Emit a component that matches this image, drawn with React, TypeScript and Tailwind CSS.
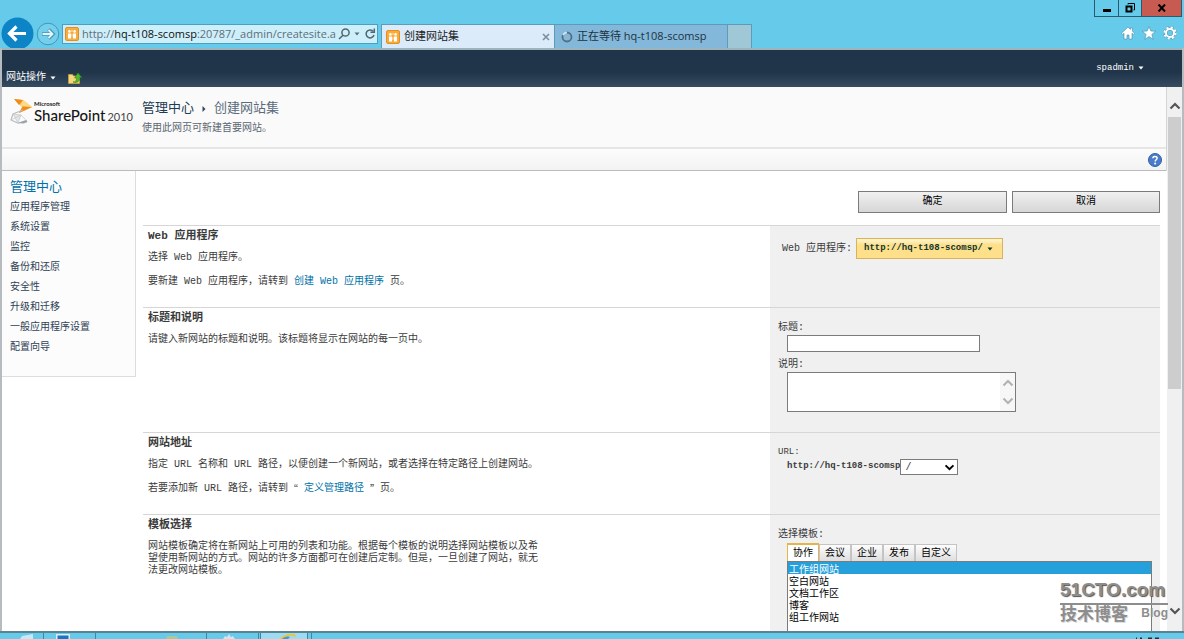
import { useState } from 'react';
import type { ReactNode } from 'react';

const NAV_ITEMS = [
  '应用程序管理',
  '系统设置',
  '监控',
  '备份和还原',
  '安全性',
  '升级和迁移',
  '一般应用程序设置',
  '配置向导',
];

const TEMPLATE_TABS = ['协作', '会议', '企业', '发布', '自定义'];

const TEMPLATES = ['工作组网站', '空白网站', '文档工作区', '博客', '组工作网站'];

function Favicon() {
  return (
    <svg viewBox="0 0 14 14" className="w-[14px] h-[14px] shrink-0">
      <rect x="0.5" y="0.5" width="13" height="13" rx="1.5" fill="#f9ab3c" stroke="#e58f20" />
      <circle cx="4.4" cy="4.4" r="1.3" fill="#fff" />
      <circle cx="9.6" cy="4.4" r="1.3" fill="#fff" />
      <path d="M3 6.5h3v5H3zM8 6.5h3v5H8z" fill="#fff" />
      <path d="M6.3 3.2h1.4v1.6H6.3zM6.5 7h1v3h-1z" fill="#fde2b4" />
    </svg>
  );
}

function CaretDown({ className }: { className: string }) {
  return (
    <svg viewBox="0 0 6 4" className={className}>
      <path d="M0.5 0.5h5L3 3.5z" fill="currentColor" />
    </svg>
  );
}

function Chevron({ up, className }: { up?: boolean; className: string }) {
  return (
    <svg viewBox="0 0 12 8" className={className} fill="none" stroke="currentColor" strokeWidth="2.2">
      <path d={up ? 'M1.5 6.5L6 2l4.5 4.5' : 'M1.5 1.5L6 6l4.5-4.5'} />
    </svg>
  );
}

function BrowserBar() {
  return (
    <header className="flex justify-between h-12 shrink-0 bg-[#66caea] font-['Open_Sans','Noto_Sans_CJK_SC',sans-serif]">
      <div className="flex items-end">
        <button type="button" aria-label="后退" className="w-[35px] h-[31px] pl-px overflow-hidden">
          <svg viewBox="0 0 33 31" className="w-[33px] h-[31px]">
            <circle cx="16.5" cy="16.5" r="16" fill="#0c84c6" />
            <path d="M25 16.5H9M15.5 9.5l-7 7 7 7" fill="none" stroke="#fff" strokeWidth="3.2" />
          </svg>
        </button>
        <button type="button" aria-label="前进" className="w-[24px] h-[26px] ml-px">
          <svg viewBox="0 0 24 26" className="w-[24px] h-[26px]">
            <circle cx="12" cy="12" r="10.8" fill="#74cfec" stroke="#4397b6" />
            <path d="M6 12h11M12.5 7.5L17 12l-4.5 4.5" fill="none" stroke="#4397b6" strokeWidth="3.6" />
            <path d="M6.5 12h10M12.5 8L16.5 12l-4 4" fill="none" stroke="#e2f5fb" strokeWidth="1.8" />
          </svg>
        </button>

        <div className="flex items-center w-[316px] h-[20px] mb-1 ml-[2px] pl-[2px] pr-px border border-[#4b9fc0] bg-[#cdeffa] text-[#5e6e78]">
          <Favicon />
          <div className="flex-1 ml-[3px] text-[11px] leading-4 whitespace-nowrap">
            http://<span className="text-[#111]">hq-t108-scomsp</span>:20787/_admin/createsite.a
          </div>
          <button type="button" aria-label="搜索">
            <svg viewBox="0 0 12 12" className="w-[12px] h-[12px]" fill="none" stroke="#52646f" strokeWidth="1.5">
              <circle cx="7.5" cy="4.5" r="3.6" />
              <path d="M5 7.2L1 11" />
            </svg>
          </button>
          <CaretDown className="w-[6px] h-1 mx-1" />
          <button type="button" aria-label="刷新">
            <svg viewBox="0 0 12 12" className="w-[12px] h-[12px]" fill="none" stroke="#52646f" strokeWidth="1.5">
              <path d="M9.3 3.4A4 4 0 1 0 10 7" />
              <path d="M10.3 0.5v3.8H6.5" />
            </svg>
          </button>
        </div>

        <div className="flex items-center w-[174px] h-6 ml-[3px] px-1 border border-b-0 border-[#5a9dbb] bg-[#dbebfa] text-[11px] text-[#222]">
          <Favicon />
          <span className="flex-1 ml-1">创建网站集</span>
          <button type="button" aria-label="关闭选项卡">
            <svg viewBox="0 0 8 8" className="w-2 h-2" stroke="#7d8d9b" strokeWidth="1.6">
              <path d="M1 1l6 6M7 1L1 7" />
            </svg>
          </button>
        </div>
        <div className="flex items-center w-[173px] h-6 px-[6px] border-t border-r border-[#5a9dbb] bg-[#83b8da] text-[11px] text-[#22323e]">
          <svg viewBox="0 0 12 12" className="w-[12px] h-[12px]" fill="none" strokeWidth="1.8">
            <circle cx="6" cy="6" r="4.5" stroke="#54707f" />
            <path d="M2 4A4.5 4.5 0 0 1 6 1.5" stroke="#c9e2f2" />
          </svg>
          <span className="ml-1">正在等待 hq-t108-scomsp</span>
        </div>
        <button type="button" aria-label="新建选项卡" className="w-6 h-6 border-t border-r border-[#5a9dbb] bg-[#9fc7d6]" />
      </div>

      <div className="flex flex-col items-end justify-between pr-[2px]">
        <div className="flex h-[17px] border border-t-0 border-[#2a5a6c] text-black">
          <button type="button" aria-label="最小化" className="flex items-center justify-center w-6 border-r border-[#2a5a6c]">
            <svg viewBox="0 0 10 10" className="w-[10px] h-[10px]">
              <path d="M1 6h8v3H1z" />
            </svg>
          </button>
          <button type="button" aria-label="还原" className="flex items-center justify-center w-[23px] border-r border-[#2a5a6c]">
            <svg viewBox="0 0 10 10" className="w-[10px] h-[10px]" fill="none" stroke="#000">
              <path d="M3 1.5V0.5h6.5v6.5H8.5" />
              <path d="M1.5 3.5h5v5h-5z" strokeWidth="2" />
            </svg>
          </button>
          <button type="button" aria-label="关闭" className="flex items-center justify-center w-[39px] bg-[#c75a51]">
            <svg viewBox="0 0 10 8" className="w-[10px] h-2" stroke="#000" strokeWidth="2">
              <path d="M1.5 0.5l6.5 7M8 0.5l-6.5 7" />
            </svg>
          </button>
        </div>
        <div className="flex items-center gap-[7px] pr-[5px] pb-2">
          <button type="button" aria-label="主页">
            <svg viewBox="0 0 14 14" className="w-[14px] h-[14px]">
              <path d="M7 1L0.5 7.2l1.2 1.2L3 7.3V13h3V9h2v4h3V7.3l1.3 1.1 1.2-1.2L11.5 5.2V2h-2v1.4z" fill="#fff" stroke="#4a8ca6" strokeWidth="0.6" />
            </svg>
          </button>
          <button type="button" aria-label="收藏夹">
            <svg viewBox="0 0 14 14" className="w-[14px] h-[14px]">
              <path d="M7 0.5l1.8 4.5 4.9 0.3-3.8 3.1 1.3 4.9L7 10.6 2.8 13.3l1.3-4.9L0.3 5.3 5.2 5z" fill="#fff" stroke="#4a8ca6" strokeWidth="0.6" />
            </svg>
          </button>
          <button type="button" aria-label="工具">
            <svg viewBox="0 0 14 14" className="w-[14px] h-[14px]" fill="none">
              <circle cx="7" cy="7" r="5.6" stroke="#4a8ca6" strokeWidth="2.6" strokeDasharray="2.6 1.8" />
              <circle cx="7" cy="7" r="4" stroke="#4a8ca6" strokeWidth="2.8" />
              <circle cx="7" cy="7" r="5.6" stroke="#fff" strokeWidth="2" strokeDasharray="2.2 2.2" />
              <circle cx="7" cy="7" r="4" stroke="#fff" strokeWidth="2" />
            </svg>
          </button>
        </div>
      </div>
    </header>
  );
}

function Ribbon() {
  return (
    <div className="flex justify-between h-[39px] shrink-0 border-t-2 border-[#9fb3bd] bg-linear-to-b from-[#20354a] from-60% to-[#374b61] text-white">
      <div className="flex items-end gap-[12px] pl-[4px] pb-[3px]">
        <button type="button" className="flex items-center gap-1 leading-3">
          网站操作
          <CaretDown className="w-[6px] h-1" />
        </button>
        <button type="button" aria-label="向上导航">
          <svg viewBox="0 0 14 12" className="w-[14px] h-[12px]">
            <path d="M0.5 2.5h4l1 1.5h6v7.5h-11z" fill="#f4d778" stroke="#c9a440" strokeWidth="0.7" />
            <path d="M5 10c3 0 3.5-1.5 3.5-4H6.5L10 1l3.7 4.5H11.5C11.5 9 10 11.5 5 10z" fill="#52b92f" stroke="#2b8a16" strokeWidth="0.6" />
          </svg>
        </button>
      </div>
      <button type="button" className="flex items-center gap-1 self-start mt-[12px] mr-[38px] text-[9px] leading-3">
        spadmin
        <CaretDown className="w-[6px] h-1" />
      </button>
    </div>
  );
}

function SharePointLogo() {
  return (
    <a href="#home" className="flex w-[124px] text-[#161616]">
      <svg viewBox="0 0 24 28" className="w-[24px] h-[28px] shrink-0">
        <path d="M4 2l9 1 9 7-6 3-7 3 3-6z" fill="#fbc04a" />
        <path d="M4 2l5 6 4-5zM22 10l-9-1-4 7z" fill="#f08c1d" />
        <path d="M13 3l-3 6 12 1z" fill="#ffd98a" />
        <path d="M13 13L3 17l-2 6 7 3 9-2" fill="none" stroke="#b8bec3" strokeWidth="1.2" />
        <path d="M3 17l8 1-3 8zM11 18l6 6M1 23l10-5" fill="#e3e6e8" stroke="#c2c7ca" strokeWidth="0.7" />
        <path d="M8 26l8-3 1.5 2-4 1.5z" fill="#9ba2a7" />
      </svg>
      <span className="flex flex-col pt-1 font-['Lato',sans-serif]">
        <span className="text-[6px] leading-[6px] font-bold">Microsoft</span>
        <span className="flex items-baseline gap-[2px] leading-4">
          <span className="text-[15px] font-medium">SharePoint</span>
          <span className="text-[11px] text-[#444]">2010</span>
        </span>
      </span>
    </a>
  );
}

function PageHeader() {
  return (
    <div className="shrink-0 border-r border-[#d5d5d5]">
      <div className="flex h-[62px] pl-[8px] pt-[10px] border-b-2 border-[#e6e6e6] bg-[#fafafa]">
        <SharePointLogo />
        <div className="pt-[2px] ml-2 leading-5">
          <h1 className="flex items-center text-[13px] text-[#1d3c55]">
            管理中心
            <svg viewBox="0 0 4 6" className="w-1 h-[6px] mx-2">
              <path d="M0.5 0l3 3-3 3z" fill="#33475b" />
            </svg>
            <span className="text-[#5b6b7a]">创建网站集</span>
          </h1>
          <p className="text-[#5b6570]">使用此网页可新建首要网站。</p>
        </div>
      </div>
      <div className="flex items-center justify-end h-[22px] pr-1 border-b border-[#b9bbbd] bg-linear-to-b from-[#fcfcfc] to-[#f3f3f4]">
        <button type="button" aria-label="帮助">
          <svg viewBox="0 0 14 14" className="w-[14px] h-[14px]">
            <circle cx="7" cy="7" r="6.5" fill="#4a7cc9" stroke="#335fa8" />
            <path d="M4.9 5.2C5 2.8 9.2 2.9 9.1 5.3 9 6.7 7.1 6.8 7.1 8.5" fill="none" stroke="#fff" strokeWidth="1.5" />
            <circle cx="7.1" cy="10.6" r="1" fill="#fff" />
          </svg>
        </button>
      </div>
    </div>
  );
}

function SideNav() {
  return (
    <nav className="w-[134px] shrink-0 self-start pl-[8px] pt-[7px] pb-[18px] border-r border-b border-[#dbddde] bg-[#fcfcfc] leading-5 text-[#2f4256]">
      <a href="#admin" className="block text-[13px] text-[#0072a8]">管理中心</a>
      {NAV_ITEMS.map((item) => (
        <a key={item} href="#nav" className="block">{item}</a>
      ))}
    </nav>
  );
}

function Section({ title, text, children }: { title: string; text: ReactNode; children: ReactNode }) {
  return (
    <section className="flex shrink-0 border-t border-[#d6d6d6] last:flex-1">
      <div className="flex-1 pl-[5px] pt-1 pb-[19px]">
        <h2 className="text-[11px] leading-3 font-bold">{title}</h2>
        {text}
      </div>
      <div className="w-[390px] shrink-0 pl-[8px] pt-[12px] bg-[#f0f0f0]">{children}</div>
    </section>
  );
}

function Scrollbar() {
  return (
    <div className="flex flex-col w-[15px] shrink-0 items-center bg-[#f0f0f0] text-[#555]">
      <Chevron up className="w-[12px] h-2 mt-[15px] mb-[7px]" />
      <div className="w-[13px] h-1/2 bg-[#cdcdcd]" />
      <Chevron className="w-[12px] h-2 mt-auto mb-4" />
    </div>
  );
}

function Taskbar() {
  return (
    <footer className="flex h-2 shrink-0 border-t-2 border-[#5c8291] bg-[#66caea]">
      <div className="w-[44px] pl-5 border-r border-[#3f87a1]">
        <svg viewBox="0 0 14 6" className="w-[14px] h-[6px]"><path d="M0 6l2-3 11-2v5z" fill="#c5eaf7" /></svg>
      </div>
      <div className="w-[52px] pl-[12px] border-r border-[#3f87a1]">
        <svg viewBox="0 0 14 6" className="w-[14px] h-[6px]"><path d="M0 1h14v5H0z" fill="#d7effa" /><path d="M1.5 2.5h11V6h-11z" fill="#1876c4" /></svg>
      </div>
      <div className="w-[111px] pl-[70px] border-r border-[#3f87a1]">
        <svg viewBox="0 0 12 6" className="w-[12px] h-[6px]"><path d="M0 6l1-3h10l1 3z" fill="#a7c8a0" /></svg>
      </div>
      <div className="w-[52px] pl-4 border-r border-[#3f87a1]">
        <svg viewBox="0 0 12 6" className="w-[12px] h-[6px]"><path d="M0 6l2-3 2 1 2-3 2 3 2-1 2 3z" fill="#d3e4ee" /></svg>
      </div>
      <div className="w-[48px] ml-px pl-[18px] border-x border-[#3f87a1] bg-[#9cdcf2]">
        <svg viewBox="0 0 18 6" className="w-[18px] h-[6px]"><path d="M1 6c2-4 9-6 15-5l1 3-4-1c-3-1-6 1-7 3z" fill="#e0c94a" /><path d="M3 6c2-2 5-3 8-2l-2 2z" fill="#3f9bd2" /></svg>
      </div>
      <div className="w-1 border-r border-[#3f87a1]" />
      <svg viewBox="0 0 30 6" className="w-[30px] h-[6px] ml-auto mr-5"><path d="M2 4.5h1V6H2zM6 4.5h2V6H6zM14 4.5h4V6h-4zM21 4.5h4V6h-4z" fill="#16323d" /></svg>
    </footer>
  );
}

function Watermark() {
  return (
    <div className="absolute right-4 bottom-[14px] w-[108px] pointer-events-none text-[#8d8d8d] font-['Liberation_Sans','Noto_Sans_CJK_SC',sans-serif] font-bold">
      <div className="text-[19px] leading-[26px] whitespace-nowrap border-b-2 border-[#8d8d8d] text-shadow-[1px_1px_1px_#555]">
        51CTO.com
      </div>
      <div className="flex justify-between leading-5 whitespace-nowrap">
        <span className="text-[17px] text-shadow-[1px_1px_0_#d9d9d9]">技术博客</span>
        <span className="text-[12px] leading-4">Blog</span>
      </div>
    </div>
  );
}

export default function App() {
  const [tab, setTab] = useState('协作');

  return (
    <div className="relative flex flex-col h-screen overflow-hidden bg-white text-[10px] text-[#3b3b3b] font-['Liberation_Mono','Noto_Sans_CJK_SC',monospace]">
      <BrowserBar />

      <div className="flex flex-col flex-1 min-h-0 border-x-2 border-[#b5bbbe]">
        <Ribbon />
        <div className="flex flex-1 min-h-0">
          <div className="flex flex-col flex-1 min-w-0">
            <PageHeader />
            <div className="flex flex-1 min-h-0">
              <SideNav />

              <form className="flex flex-col flex-1 min-w-0 mx-[7px]" onSubmit={(e) => e.preventDefault()}>
                <div className="flex justify-end gap-[5px] pt-5 pb-[12px] text-black">
                  <button type="submit" className="w-[149px] h-[22px] pb-[2px] border border-[#7b7b7b] bg-linear-to-b from-[#f1f1f1] to-[#d6d6d6]">确定</button>
                  <button type="button" className="w-[148px] h-[22px] pb-[2px] border border-[#7b7b7b] bg-linear-to-b from-[#f1f1f1] to-[#d6d6d6]">取消</button>
                </div>

                <Section
                  title="Web 应用程序"
                  text={
                    <>
                      <p className="mt-[10px] leading-3">选择 Web 应用程序。</p>
                      <p className="mt-[12px] leading-3">
                        要新建 Web 应用程序，请转到 <a href="#newapp" className="text-[#0072a8]">创建 Web 应用程序</a> 页。
                      </p>
                    </>
                  }
                >
                  <div className="flex items-center pl-1">
                    <span id="webapp-label">Web 应用程序:</span>
                    <button type="button" aria-labelledby="webapp-label webapp-value" className="flex items-center gap-1 h-[21px] ml-1 px-[7px] pr-[9px] border border-[#d6b35e] bg-linear-to-b from-[#fff0bf] from-10% to-[#ffe08a] to-30% text-[9px] font-bold text-[#0b3530]">
                      <span id="webapp-value">http://hq-t108-scomsp/</span>
                      <CaretDown className="w-[6px] h-1" />
                    </button>
                  </div>
                </Section>

                <Section title="标题和说明" text={<p className="mt-[10px] leading-3">请键入新网站的标题和说明。该标题将显示在网站的每一页中。</p>}>
                  <label htmlFor="site-title" className="block pt-[2px] leading-3">标题:</label>
                  <input id="site-title" type="text" className="block w-[193px] h-[17px] mt-px ml-[9px] px-1 border border-[#7b7b7b] bg-white" />
                  <label htmlFor="site-desc" className="block pt-[7px] leading-3">说明:</label>
                  <div className="relative w-[229px] mt-px mb-5 ml-[9px]">
                    <textarea id="site-desc" className="block w-full h-10 pr-4 border border-[#7b7b7b] bg-white resize-none" />
                    <div className="absolute right-px inset-y-px flex flex-col justify-between w-[15px] py-[6px] items-center bg-[#f7f7f7] text-[#b3b3b3]">
                      <Chevron up className="w-[12px] h-2" />
                      <Chevron className="w-[12px] h-2" />
                    </div>
                  </div>
                </Section>

                <Section
                  title="网站地址"
                  text={
                    <>
                      <p className="mt-[10px] leading-3">指定 URL 名称和 URL 路径，以便创建一个新网站，或者选择在特定路径上创建网站。</p>
                      <p className="mt-[12px] leading-3">
                        若要添加新 URL 路径，请转到<span className="align-top font-['Noto_Sans_CJK_SC',sans-serif]">“</span>{' '}
                        <a href="#paths" className="text-[#0072a8]">定义管理路径</a>{' '}
                        <span className="align-top font-['Noto_Sans_CJK_SC',sans-serif]">”</span>页。
                      </p>
                    </>
                  }
                >
                  <label htmlFor="site-path" className="block pt-px text-[9px] leading-3">URL:</label>
                  <div className="flex items-center mt-px ml-[9px]">
                    <span className="text-[9px] font-bold">http://hq-t108-scomsp</span>
                    <span className="relative flex items-center">
                      <select id="site-path" className="appearance-none w-[58px] h-4 px-1 border border-[#7b7b7b] bg-white">
                        <option>/</option>
                      </select>
                      <Chevron className="absolute right-[3px] w-[11px] h-[7px] pointer-events-none text-black" />
                    </span>
                  </div>
                </Section>

                <Section
                  title="模板选择"
                  text={
                    <p className="max-w-[396px] mt-[10px] leading-3">
                      网站模板确定将在新网站上可用的列表和功能。根据每个模板的说明选择网站模板以及希望使用新网站的方式。网站的许多方面都可在创建后定制。但是，一旦创建了网站，就无法更改网站模板。
                    </p>
                  }
                >
                  <label htmlFor="template" className="block pt-[2px] leading-3">选择模板:</label>
                  <div className="flex items-end mt-[2px] ml-[9px] text-black">
                    {TEMPLATE_TABS.map((name) => (
                      <button
                        key={name}
                        type="button"
                        onClick={() => setTab(name)}
                        className={
                          name === tab
                            ? 'h-[18px] px-[5px] border border-b-0 border-t-2 border-[#e3b54c] bg-white'
                            : 'h-[17px] px-[5px] border border-b-0 border-[#c4c4c4] bg-linear-to-b from-[#fdfdfd] to-[#dedede]'
                        }
                      >
                        {name}
                      </button>
                    ))}
                  </div>
                  <select id="template" size={8} defaultValue={TEMPLATES[0]} className="block w-[365px] ml-[9px] p-0 border border-[#7b7b7b] bg-white text-black leading-3 overflow-hidden font-['Noto_Sans_CJK_SC',sans-serif]">
                    {TEMPLATES.map((name) => (
                      <option key={name} className="flex items-center h-3 min-h-0 px-px py-0 leading-3 checked:bg-[linear-gradient(#26a0da,#26a0da)] checked:[-webkit-text-fill-color:#fff]">
                        {name}
                      </option>
                    ))}
                  </select>
                </Section>
              </form>
            </div>
          </div>
          <Scrollbar />
        </div>
      </div>

      <Taskbar />
      <Watermark />
    </div>
  );
}
